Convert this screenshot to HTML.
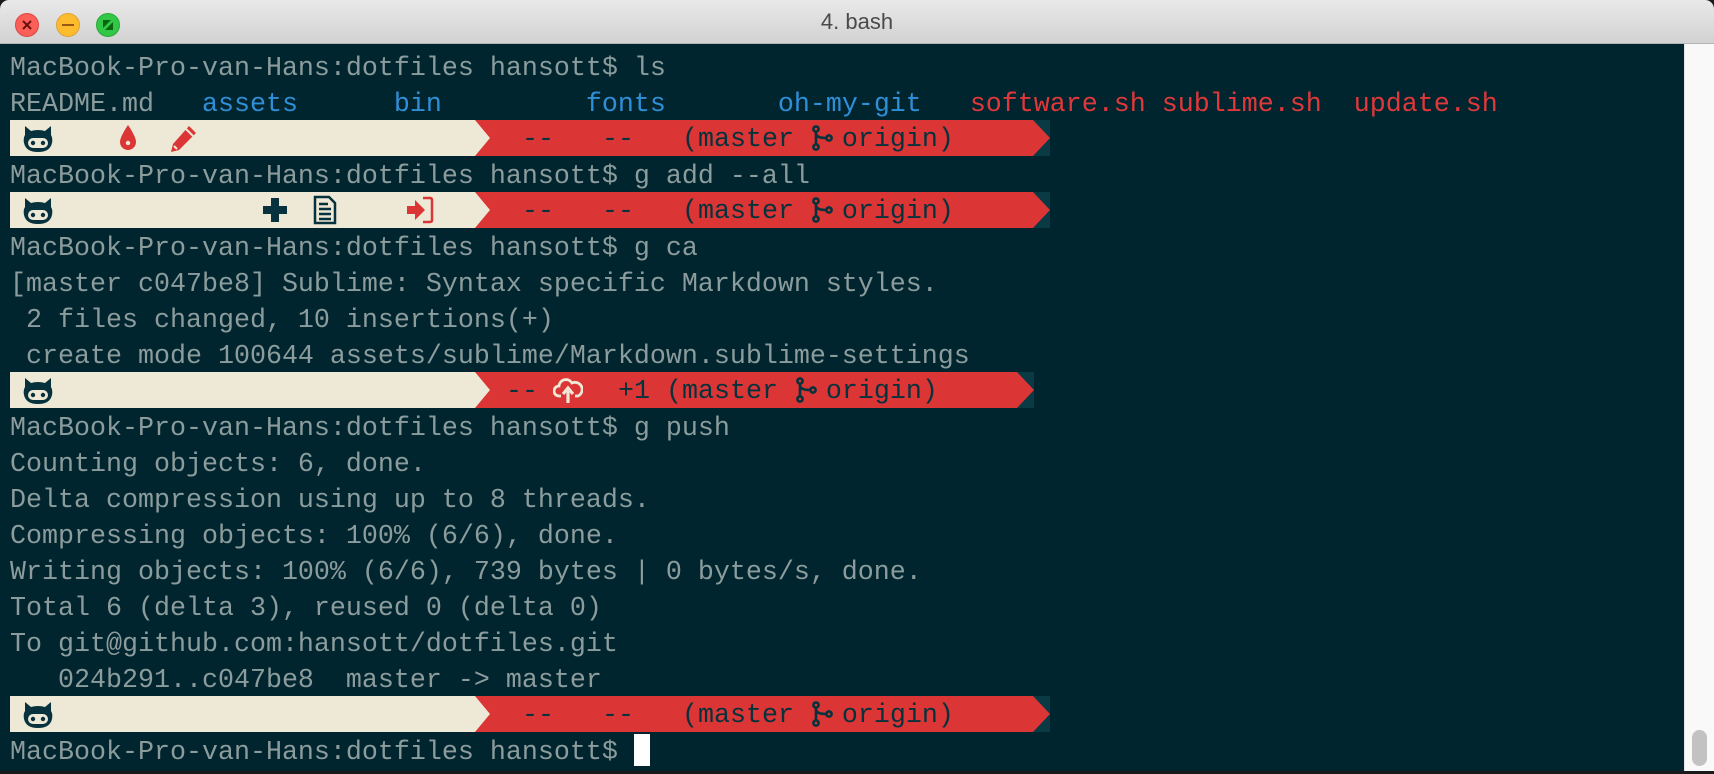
<!DOCTYPE html>
<html><head><meta charset="utf-8"><style>
html,body{margin:0;padding:0;width:1714px;height:774px;overflow:hidden;background:#1a1a1a;}
#win{position:absolute;left:0;top:0;width:1714px;height:771px;background:#00252f;border-radius:9px 9px 0 0;overflow:hidden;}
#title{position:absolute;left:0;top:0;width:1714px;height:44px;background:linear-gradient(#e9e9e9,#d2d2d2);border-bottom:1px solid #b5b5b5;box-sizing:border-box;}
#title .t{position:absolute;left:0;width:1714px;top:9px;text-align:center;font:22px "Liberation Sans",sans-serif;color:#4a4a4a;}
.tl{position:absolute;top:13px;width:24px;height:24px;border-radius:50%;box-sizing:border-box;}
#sb{position:absolute;left:1684px;top:44px;width:30px;height:730px;background:#f9f9f9;border-left:1px solid #e6e6e6;}
#thumb{position:absolute;left:1692px;top:730px;width:15px;height:36px;border-radius:8px;background:#c2c2c2;}
.r{position:absolute;left:10px;height:36px;padding-top:3px;font:26.67px/36px "Liberation Mono",monospace;color:#8c9c9c;white-space:pre;}
.b{color:#2f8fd6}.rd{color:#e0383a}
.bar{position:absolute;left:10px;height:36px;}
.bt{position:absolute;top:0;padding-top:2px;font:26.67px/36px "Liberation Mono",monospace;color:#06323d;white-space:pre;}
#cur{position:absolute;left:634px;top:734px;width:16px;height:32px;background:#fff;}
</style></head><body>
<div id="win">
<div id="title"><div class="t">4. bash</div>
<div class="tl" style="left:15px;background:#fc5f57;border:1px solid #df4744"><svg width="22" height="22" viewBox="0 0 22 22"><path d="M7 7L15 15M15 7L7 15" stroke="#6e0f0b" stroke-width="2"/></svg></div>
<div class="tl" style="left:56px;background:#fdbc2e;border:1px solid #dea236"><svg width="22" height="22" viewBox="0 0 22 22"><path d="M5 11H17" stroke="#985712" stroke-width="2"/></svg></div>
<div class="tl" style="left:96px;background:#33c748;border:1px solid #27aa35"><svg width="22" height="22" viewBox="0 0 22 22"><path d="M6 6H14L6 14Z M16 8V16H8Z" fill="#0b650d"/></svg></div>
</div>
<div id="sb"></div><div id="thumb"></div>

<div class="r" style="top:48px">MacBook-Pro-van-Hans:dotfiles hansott$ ls</div>
<div class="r" style="top:84px">README.md   <span class="b">assets      bin         fonts       oh-my-git</span>   <span class="rd">software.sh sublime.sh  update.sh</span></div>

<svg class="bar" style="top:120px" width="1060" height="36">
<path d="M1020 0H1040V36H1020Z" fill="#0a3a44"/>
<path d="M440 0H1023L1040 18L1023 36H440Z" fill="#dc3535"/>
<path d="M0 0H465L480 18L465 36H0Z" fill="#eee8d6"/>
</svg>
<svg class="bar" style="top:192px" width="1060" height="36">
<path d="M1020 0H1040V36H1020Z" fill="#0a3a44"/>
<path d="M440 0H1023L1040 18L1023 36H440Z" fill="#dc3535"/>
<path d="M0 0H465L480 18L465 36H0Z" fill="#eee8d6"/>
</svg>
<svg class="bar" style="top:372px" width="1060" height="36">
<path d="M1004 0H1024V36H1004Z" fill="#0a3a44"/>
<path d="M440 0H1007L1024 18L1007 36H440Z" fill="#dc3535"/>
<path d="M0 0H465L480 18L465 36H0Z" fill="#eee8d6"/>
</svg>
<svg class="bar" style="top:696px" width="1060" height="36">
<path d="M1020 0H1040V36H1020Z" fill="#0a3a44"/>
<path d="M440 0H1023L1040 18L1023 36H440Z" fill="#dc3535"/>
<path d="M0 0H465L480 18L465 36H0Z" fill="#eee8d6"/>
</svg>

<div class="bt" style="left:522px;top:120px">--   --   (master   origin)</div>
<div class="bt" style="left:522px;top:192px">--   --   (master   origin)</div>
<div class="bt" style="left:506px;top:372px">--     +1 (master   origin)</div>
<div class="bt" style="left:522px;top:696px">--   --   (master   origin)</div>

<svg style="position:absolute;left:810px;top:125px" width="26" height="26" viewBox="0 0 26 26"><g fill="none" stroke="#06323d" stroke-width="2.6"><circle cx="6" cy="4" r="2.6"/><circle cx="6" cy="22" r="2.6"/><circle cx="19" cy="13" r="2.6"/><path d="M6 7V19M6 9Q7 13 16 13"/></g></svg>
<svg style="position:absolute;left:810px;top:197px" width="26" height="26" viewBox="0 0 26 26"><g fill="none" stroke="#06323d" stroke-width="2.6"><circle cx="6" cy="4" r="2.6"/><circle cx="6" cy="22" r="2.6"/><circle cx="19" cy="13" r="2.6"/><path d="M6 7V19M6 9Q7 13 16 13"/></g></svg>
<svg style="position:absolute;left:794px;top:377px" width="26" height="26" viewBox="0 0 26 26"><g fill="none" stroke="#06323d" stroke-width="2.6"><circle cx="6" cy="4" r="2.6"/><circle cx="6" cy="22" r="2.6"/><circle cx="19" cy="13" r="2.6"/><path d="M6 7V19M6 9Q7 13 16 13"/></g></svg>
<svg style="position:absolute;left:810px;top:701px" width="26" height="26" viewBox="0 0 26 26"><g fill="none" stroke="#06323d" stroke-width="2.6"><circle cx="6" cy="4" r="2.6"/><circle cx="6" cy="22" r="2.6"/><circle cx="19" cy="13" r="2.6"/><path d="M6 7V19M6 9Q7 13 16 13"/></g></svg>

<svg style="position:absolute;left:22px;top:125px" width="32" height="28" viewBox="0 0 32 28"><path d="M3 1L9 6Q16 4 23 6L29 1L29 10Q31 13 30 18Q28 27 16 27Q4 27 2 18Q1 13 3 10Z" fill="#06323d"/><rect x="6" y="13" width="20" height="10" rx="5" fill="#eee8d6"/><circle cx="11" cy="18" r="2.2" fill="#06323d"/><circle cx="21" cy="18" r="2.2" fill="#06323d"/></svg>
<svg style="position:absolute;left:22px;top:197px" width="32" height="28" viewBox="0 0 32 28"><path d="M3 1L9 6Q16 4 23 6L29 1L29 10Q31 13 30 18Q28 27 16 27Q4 27 2 18Q1 13 3 10Z" fill="#06323d"/><rect x="6" y="13" width="20" height="10" rx="5" fill="#eee8d6"/><circle cx="11" cy="18" r="2.2" fill="#06323d"/><circle cx="21" cy="18" r="2.2" fill="#06323d"/></svg>
<svg style="position:absolute;left:22px;top:377px" width="32" height="28" viewBox="0 0 32 28"><path d="M3 1L9 6Q16 4 23 6L29 1L29 10Q31 13 30 18Q28 27 16 27Q4 27 2 18Q1 13 3 10Z" fill="#06323d"/><rect x="6" y="13" width="20" height="10" rx="5" fill="#eee8d6"/><circle cx="11" cy="18" r="2.2" fill="#06323d"/><circle cx="21" cy="18" r="2.2" fill="#06323d"/></svg>
<svg style="position:absolute;left:22px;top:701px" width="32" height="28" viewBox="0 0 32 28"><path d="M3 1L9 6Q16 4 23 6L29 1L29 10Q31 13 30 18Q28 27 16 27Q4 27 2 18Q1 13 3 10Z" fill="#06323d"/><rect x="6" y="13" width="20" height="10" rx="5" fill="#eee8d6"/><circle cx="11" cy="18" r="2.2" fill="#06323d"/><circle cx="21" cy="18" r="2.2" fill="#06323d"/></svg>

<svg style="position:absolute;left:118px;top:124px" width="20" height="28" viewBox="0 0 20 28"><path d="M10 1Q18 13 18 18A8 8 0 0 1 2 18Q2 13 10 1Z" fill="#dc3535"/><circle cx="10" cy="19" r="2.2" fill="#eee8d6"/></svg>
<svg style="position:absolute;left:168px;top:124px" width="30" height="30" viewBox="0 0 30 30"><path d="M21 2L28 9L11 26L3 28L5 20Z" fill="#dc3535"/><path d="M18 5L25 12" stroke="#eee8d6" stroke-width="2"/><path d="M6 22L9 25" stroke="#eee8d6" stroke-width="2"/></svg>

<svg style="position:absolute;left:262px;top:197px" width="26" height="26" viewBox="0 0 26 26"><path d="M9 1H17V9H25V17H17V25H9V17H1V9H9Z" fill="#06323d"/></svg>
<svg style="position:absolute;left:313px;top:195px" width="24" height="30" viewBox="0 0 24 30"><path d="M2 2H16L22 8V28H2Z" fill="none" stroke="#06323d" stroke-width="2.5"/><path d="M6 9H15M6 14H18M6 19H18M6 24H18" stroke="#06323d" stroke-width="2.5"/></svg>
<svg style="position:absolute;left:406px;top:196px" width="28" height="28" viewBox="0 0 28 28"><path d="M1 10H9V4L19 14L9 24V18H1Z" fill="#dc3535"/><path d="M17 2H24Q26 2 26 4V24Q26 26 24 26H17" fill="none" stroke="#dc3535" stroke-width="2.5"/></svg>

<svg style="position:absolute;left:553px;top:376px" width="30" height="28" viewBox="0 0 30 28"><path d="M8 20H6A5 5 0 0 1 6 10A7 7 0 0 1 19 7A6 6 0 0 1 25 20H22" fill="none" stroke="#eee8d6" stroke-width="2.8"/><path d="M15 27V15M10 18L15 12L20 18" fill="none" stroke="#eee8d6" stroke-width="3.2"/></svg>

<div class="r" style="top:156px">MacBook-Pro-van-Hans:dotfiles hansott$ g add --all</div>
<div class="r" style="top:228px">MacBook-Pro-van-Hans:dotfiles hansott$ g ca</div>
<div class="r" style="top:264px">[master c047be8] Sublime: Syntax specific Markdown styles.</div>
<div class="r" style="top:300px"> 2 files changed, 10 insertions(+)</div>
<div class="r" style="top:336px"> create mode 100644 assets/sublime/Markdown.sublime-settings</div>
<div class="r" style="top:408px">MacBook-Pro-van-Hans:dotfiles hansott$ g push</div>
<div class="r" style="top:444px">Counting objects: 6, done.</div>
<div class="r" style="top:480px">Delta compression using up to 8 threads.</div>
<div class="r" style="top:516px">Compressing objects: 100% (6/6), done.</div>
<div class="r" style="top:552px">Writing objects: 100% (6/6), 739 bytes | 0 bytes/s, done.</div>
<div class="r" style="top:588px">Total 6 (delta 3), reused 0 (delta 0)</div>
<div class="r" style="top:624px">To git@github.com:hansott/dotfiles.git</div>
<div class="r" style="top:660px">   024b291..c047be8  master -&gt; master</div>
<div class="r" style="top:732px">MacBook-Pro-van-Hans:dotfiles hansott$ </div>
<div id="cur"></div>
</div>
</body></html>
